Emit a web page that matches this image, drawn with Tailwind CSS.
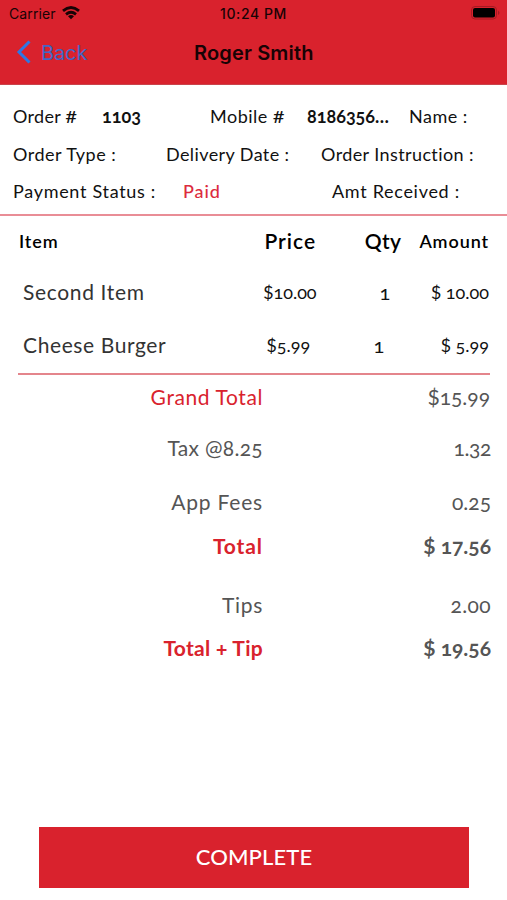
<!DOCTYPE html>
<html lang="en">
<head>
<meta charset="utf-8">
<title>Order</title>
<script src="https://cdn.jsdelivr.net/npm/@tailwindcss/browser@4"></script>
</head>
<body class="bg-white">
<div class="w-[507px] h-[900px] flex flex-col overflow-hidden whitespace-nowrap font-[Lato,sans-serif] oldstyle-nums text-[18px] text-[#111]">
  <header class="h-[85px] shrink-0 bg-[#d9222d] border-b border-[#c9444b] text-[#180305] font-[Inter,sans-serif] lining-nums">
    <div class="h-[27px] flex items-center text-[14px]">
      <span class="ml-[9px] w-[53px] tracking-[0.1px]">Carrier</span>
      <svg class="-mt-[1px] w-[18px] h-[14px]" viewBox="0 0 18 14" fill="none" stroke="currentColor" stroke-width="2.8"><path d="M1 4.8Q9-1.8 17 4.8M4 8.3Q9 4.3 14 8.3"/><path d="M6 10.2Q9 8 12 10.2L9 13.3Z" fill="currentColor" stroke="none"/></svg>
      <span class="ml-[140px] w-[68px] font-medium tracking-[0.6px]">10:24 PM</span>
      <svg class="-mt-[1px] ml-[183px] w-[30px] h-[14px]" viewBox="0 0 30 14"><rect x=".5" y=".5" width="25" height="12.5" rx="3.5" fill="none" stroke="#a51a23"/><rect x="2" y="2" width="22" height="9.5" rx="2" fill="#000"/><path d="M27 4.5Q30 6.8 27 9Z" fill="#a51a23"/></svg>
    </div>
    <div class="h-[51px] flex items-center text-[20px]">
      <svg class="-mt-[1px] ml-[16px] w-[16px] h-[24px]" viewBox="0 0 16 24" fill="none" stroke="#2d77e5" stroke-width="3"><path d="M13.5 1.5L3 12L13.5 22.5"/></svg>
      <span class="ml-[9px] w-[153px] text-[#4266c6] tracking-[-0.1px]">Back</span>
      <span class="font-semibold tracking-[0.15px]">Roger Smith</span>
    </div>
  </header>
  <section class="h-[131px] shrink-0 pt-[12px] border-b-2 border-[#e98d96]">
    <div class="h-[38px] flex items-center">
      <span class="ml-[13px] w-[89px] tracking-[0.3px]">Order <span class="text-[21px] leading-none">#</span></span><span class="w-[108px] font-bold">1103</span><span class="w-[97px] tracking-[0.5px]">Mobile <span class="text-[21px] leading-none">#</span></span><span class="w-[102px] font-bold">8186356…</span><span class="tracking-[0.5px]">Name :</span>
    </div>
    <div class="h-[38px] flex items-center">
      <span class="ml-[13px] w-[153px] tracking-[0.5px]">Order Type :</span><span class="w-[155px] tracking-[0.4px]">Delivery Date :</span><span class="tracking-[0.4px]">Order Instruction :</span>
    </div>
    <div class="h-[37px] flex items-center">
      <span class="ml-[13px] w-[170px] tracking-[0.7px]">Payment Status :</span><span class="w-[149px] text-[#dc2c3e] font-medium tracking-[0.9px]">Paid</span><span class="tracking-[0.7px]">Amt Received :</span>
    </div>
  </section>
  <section class="mx-[18px] h-[157px] shrink-0">
    <div class="h-[51px] flex items-center font-semibold text-black">
      <span class="ml-[1px] w-[247px] tracking-[0.9px]">Item</span><span class="-mt-[2px] w-[101px] text-[21px] tracking-[1px]">Price</span><span class="-mt-[2px] w-[55px] text-[21px] tracking-[0.4px]">Qty</span><span class="tracking-[0.9px]">Amount</span>
    </div>
    <div class="h-[50px] flex items-center">
      <span class="ml-[5px] w-[242px] text-[21px] text-[#333] tracking-[0.65px]">Second Item</span><span class="w-[117px]"><span class="lining-nums">$</span>10.00</span><span class="w-[51px] text-[20px]">1</span><span class="ml-[1px]"><span class="lining-nums">$</span> 10.00</span>
    </div>
    <div class="h-[56px] flex items-center">
      <span class="ml-[5px] w-[246px] text-[21px] text-[#333] tracking-[0.6px]">Cheese Burger</span><span class="w-[108px]"><span class="lining-nums">$</span>5.99</span><span class="w-[67px] text-[20px]">1</span><span class="ml-[1px]"><span class="lining-nums">$</span> 5.99</span>
    </div>
  </section>
  <div class="mx-[18px] w-[472px] h-[2px] shrink-0 bg-[#e4858c]"></div>
  <section class="text-[21px] text-[#555] [&>div]:flex [&>div]:items-center [&>div>span:first-child]:w-[263px] [&>div>span:first-child]:text-right [&>div>span:last-child]:w-[228px] [&>div>span:last-child]:text-right">
    <div class="h-[44px]"><span class="text-[#d9222d] tracking-[0.6px]">Grand Total</span><span class="pr-[1px]"><span class="lining-nums">$</span>15.99</span></div>
    <div class="h-[57px]"><span class="tracking-[0.3px]">Tax @8.25</span><span class="tracking-[-0.4px]">1.32</span></div>
    <div class="h-[51px]"><span class="tracking-[0.8px]">App Fees</span><span>0.25</span></div>
    <div class="h-[37px] font-bold"><span class="text-[#d9222d] tracking-[0.9px]">Total</span><span><span class="lining-nums">$</span> 17.56</span></div>
    <div class="h-[81px]"><span class="tracking-[0.7px]">Tips</span><span class="tracking-[0.4px]">2.00</span></div>
    <div class="h-[6px] font-bold"><span class="text-[#d9222d] tracking-[0.3px]">Total + Tip</span><span><span class="lining-nums">$</span> 19.56</span></div>
  </section>
  <button class="mt-auto mb-[12.5px] ml-[39px] w-[430px] h-[60.5px] pb-[2px] shrink-0 bg-[#d9222d] text-white text-[22px] font-medium tracking-[0.1px]">COMPLETE</button>
</div>
</body>
</html>
